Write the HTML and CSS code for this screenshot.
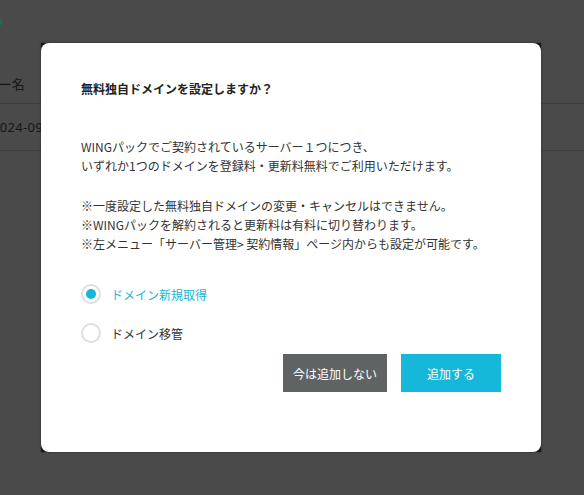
FILE: index.html
```html
<!DOCTYPE html>
<html lang="ja">
<head>
<meta charset="utf-8">
<link rel="stylesheet" href="styles.css">
</head>
<body>
<div class="page">
  <div class="logo-mark"></div>
  <div class="table">
    <div class="row head"><span class="cell-name">サーバー名</span></div>
    <div class="row"><span class="cell-date">2024-09-01</span></div>
  </div>
  <div class="modal-frame">
    <div class="modal">
      <h2 class="title">無料独自ドメインを設定しますか？</h2>
      <p class="lead">WINGパックでご契約されているサーバー１つにつき、<br>いずれか1つのドメインを登録料・更新料無料でご利用いただけます。</p>
      <p class="notes">※一度設定した無料独自ドメインの変更・キャンセルはできません。<br>※WINGパックを解約されると更新料は有料に切り替わります。<br>※左メニュー「サーバー管理&gt; 契約情報」ページ内からも設定が可能です。</p>
      <div class="options">
        <label class="option checked"><span class="radio"></span><span>ドメイン新規取得</span></label>
        <label class="option"><span class="radio"></span><span>ドメイン移管</span></label>
      </div>
      <div class="actions">
        <button class="btn btn-gray">今は追加しない</button>
        <button class="btn btn-cyan">追加する</button>
      </div>
    </div>
  </div>
</div>
</body>
</html>
```
FILE: styles.css
```css
* { box-sizing: border-box; }
html, body { margin: 0; padding: 0; }
body {
  font-family: "Noto Sans CJK JP", "Noto Sans", sans-serif;
  background: #4a4a4a;
}
.page {
  position: relative;
  width: 584px;
  height: 495px;
  overflow: hidden;
  background: #4a4a4a;
}
.logo-mark {
  position: absolute;
  left: 0;
  top: 19px;
  width: 2px;
  height: 6px;
  background: #1d6b52;
}
.table {
  padding-top: 75px;
}
.row {
  height: 47px;
  border-bottom: 1px solid #3e3e3e;
  display: flex;
  align-items: center;
  color: #161616;
  font-size: 13px;
  white-space: nowrap;
}
.row.head {
  height: 29px;
  align-items: flex-start;
}
.cell-name { margin-left: -40px; margin-top: -1px; }
.cell-date { margin-left: -8px; font-family: "Noto Sans", sans-serif; letter-spacing: 0.3px; }

.modal-frame {
  position: absolute;
  left: 41px;
  top: 43px;
  width: 500px;
  height: 409px;
  background: #151515;
  box-shadow: 0 0 2px rgba(0,0,0,0.5);
}
.modal {
  width: 100%;
  height: 100%;
  background: #fff;
  border-radius: 8px;
  padding: 36px 40px 0 40px;
  color: #333;
  font-size: 12px;
  line-height: 19px;
}
.title {
  margin: 0;
  font-size: 12px;
  font-weight: bold;
  line-height: 19px;
  color: #222;
}
.lead {
  margin: 39px 0 0 0;
}
.notes {
  margin: 21px 0 0 0;
}
.options {
  margin-top: 31px;
  display: flex;
  flex-direction: column;
  gap: 19px;
}
.option {
  display: flex;
  align-items: center;
  gap: 10px;
  height: 20px;
  color: #333;
}
.radio {
  width: 20px;
  height: 20px;
  border: 2px solid #dedede;
  border-radius: 50%;
  display: flex;
  align-items: center;
  justify-content: center;
  background: #fff;
}
.option.checked { color: #1ab4d6; }
.option.checked .radio::after {
  content: "";
  width: 10px;
  height: 10px;
  border-radius: 50%;
  background: #16b6da;
}
.actions {
  margin-top: 11px;
  display: flex;
  justify-content: flex-end;
  gap: 14px;
}
.btn {
  height: 38px;
  border: none;
  font-family: inherit;
  font-size: 12px;
  color: #fff;
  padding: 0;
}
.btn-gray { width: 104px; background: #5f6364; }
.btn-cyan { width: 100px; background: #15b8d9; }
```
